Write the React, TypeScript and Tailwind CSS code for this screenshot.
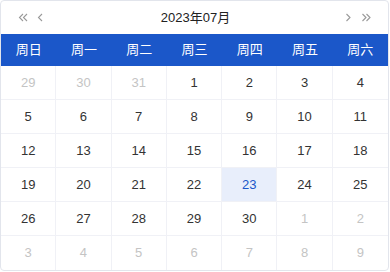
import React from "react";

const weeks = ["周日", "周一", "周二", "周三", "周四", "周五", "周六"];

type Cell = { d: number; muted?: boolean; active?: boolean };

const days: Cell[] = [
  { d: 29, muted: true }, { d: 30, muted: true }, { d: 31, muted: true },
  ...Array.from({ length: 30 }, (_, i) => ({ d: i + 1, active: i + 1 === 23 })),
  { d: 1, muted: true }, { d: 2, muted: true }, { d: 3, muted: true }, { d: 4, muted: true },
  { d: 5, muted: true }, { d: 6, muted: true }, { d: 7, muted: true }, { d: 8, muted: true }, { d: 9, muted: true },
];

function Chev({ dir, double }: { dir: "l" | "r"; double?: boolean }) {
  const single = dir === "l" ? "M5 1 L1.5 4.5 L5 8" : "M1.5 1 L5 4.5 L1.5 8";
  return (
    <svg width={double ? 10 : 7} height="9" viewBox={double ? "0 0 10 9" : "0 0 7 9"} fill="none">
      <path d={single} stroke="#9a9a9a" strokeWidth="1.1" />
      {double && <path d={dir === "l" ? "M9 1 L5.5 4.5 L9 8" : "M5.5 1 L9 4.5 L5.5 8"} stroke="#9a9a9a" strokeWidth="1.1" />}
    </svg>
  );
}

export default function App() {
  return (
    <div
      className="w-[389px] h-[271px] border border-[#e2e5ec] rounded-[4px] overflow-hidden bg-white flex flex-col"
      style={{ fontFamily: '"Liberation Sans", "Noto Sans CJK SC", sans-serif' }}
    >
      <div className="h-[33px] flex items-center px-[17px] text-[#222]">
        <div className="flex items-center gap-[9px]">
          <Chev dir="l" double />
          <Chev dir="l" />
        </div>
        <div className="flex-1 text-center text-[13px] pl-[2px]">2023年07月</div>
        <div className="flex items-center gap-[9px]">
          <Chev dir="r" />
          <Chev dir="r" double />
        </div>
      </div>
      <div className="h-[32px] bg-[#1b57c9] grid grid-cols-7 items-center text-white text-[13px]">
        {weeks.map((w) => (
          <div key={w} className="text-center">{w}</div>
        ))}
      </div>
      <div className="flex-1 grid grid-cols-7 grid-rows-6">
        {days.map((c, i) => {
          const col = i % 7;
          const row = Math.floor(i / 7);
          return (
            <div
              key={i}
              className={[
                "flex items-center justify-center text-[13px]",
                col < 6 ? "border-r border-r-[#f0f1f6]" : "",
                row < 5 ? "border-b border-b-[#f0f1f6]" : "",
                c.active ? "bg-[#e8eefb] text-[#1b57c9]" : c.muted ? "text-[#c4c4c4]" : "text-[#333]",
              ].join(" ")}
            >
              {c.d}
            </div>
          );
        })}
      </div>
    </div>
  );
}
